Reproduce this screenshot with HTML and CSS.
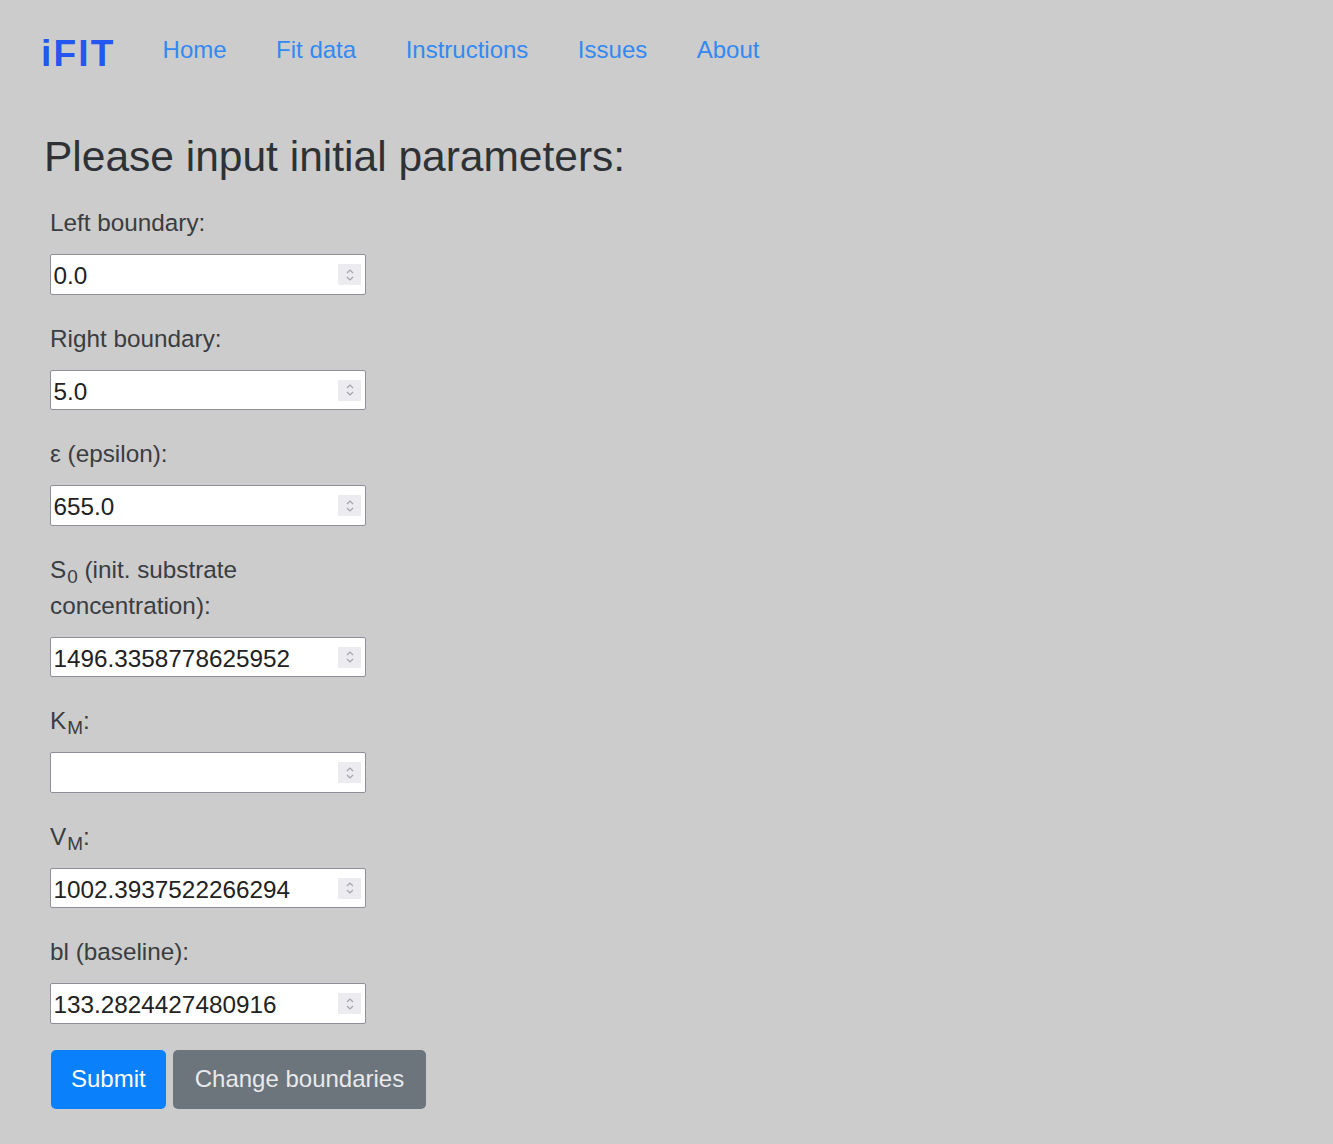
FILE: index.html
```html
<!DOCTYPE html>
<html lang="en">
<head>
<meta charset="utf-8">
<title>iFIT</title>
<link rel="stylesheet" href="styles.css">
</head>
<body>
<nav class="nav">
  <a class="brand" href="#">iFIT</a>
  <div class="links">
    <a class="link" href="#">Home</a>
    <a class="link" href="#">Fit data</a>
    <a class="link" href="#">Instructions</a>
    <a class="link" href="#">Issues</a>
    <a class="link" href="#">About</a>
  </div>
</nav>
<main class="main">
  <h3 class="title">Please input initial parameters:</h3>
  <form class="form">
    <div class="group">
      <label class="label">Left boundary:</label>
      <div class="field"><input class="input" type="text" value="0.0"><span class="spin"><svg width="10" height="16" viewBox="0 0 10 16"><path d="M2 6 L5 3 L8 6 M2 10 L5 13 L8 10" fill="none" stroke="#a3a3ad" stroke-width="1.2"/></svg></span></div>
    </div>
    <div class="group">
      <label class="label">Right boundary:</label>
      <div class="field"><input class="input" type="text" value="5.0"><span class="spin"><svg width="10" height="16" viewBox="0 0 10 16"><path d="M2 6 L5 3 L8 6 M2 10 L5 13 L8 10" fill="none" stroke="#a3a3ad" stroke-width="1.2"/></svg></span></div>
    </div>
    <div class="group">
      <label class="label">ε (epsilon):</label>
      <div class="field"><input class="input" type="text" value="655.0"><span class="spin"><svg width="10" height="16" viewBox="0 0 10 16"><path d="M2 6 L5 3 L8 6 M2 10 L5 13 L8 10" fill="none" stroke="#a3a3ad" stroke-width="1.2"/></svg></span></div>
    </div>
    <div class="group">
      <label class="label">S<sub class="sub">0</sub> (init. substrate concentration):</label>
      <div class="field"><input class="input" type="text" value="1496.3358778625952"><span class="spin"><svg width="10" height="16" viewBox="0 0 10 16"><path d="M2 6 L5 3 L8 6 M2 10 L5 13 L8 10" fill="none" stroke="#a3a3ad" stroke-width="1.2"/></svg></span></div>
    </div>
    <div class="group">
      <label class="label">K<sub class="sub">M</sub>:</label>
      <div class="field"><input class="input" type="text" value=""><span class="spin"><svg width="10" height="16" viewBox="0 0 10 16"><path d="M2 6 L5 3 L8 6 M2 10 L5 13 L8 10" fill="none" stroke="#a3a3ad" stroke-width="1.2"/></svg></span></div>
    </div>
    <div class="group">
      <label class="label">V<sub class="sub">M</sub>:</label>
      <div class="field"><input class="input" type="text" value="1002.3937522266294"><span class="spin"><svg width="10" height="16" viewBox="0 0 10 16"><path d="M2 6 L5 3 L8 6 M2 10 L5 13 L8 10" fill="none" stroke="#a3a3ad" stroke-width="1.2"/></svg></span></div>
    </div>
    <div class="group">
      <label class="label">bl (baseline):</label>
      <div class="field"><input class="input" type="text" value="133.2824427480916"><span class="spin"><svg width="10" height="16" viewBox="0 0 10 16"><path d="M2 6 L5 3 L8 6 M2 10 L5 13 L8 10" fill="none" stroke="#a3a3ad" stroke-width="1.2"/></svg></span></div>
    </div>
    <div class="buttons">
      <button class="btn btn-primary" type="button">Submit</button>
      <button class="btn btn-secondary" type="button">Change boundaries</button>
    </div>
  </form>
</main>
</body>
</html>
```

FILE: styles.css
```css
html, body {
  margin: 0;
  padding: 0;
}
body {
  background: #cccccc;
  font-family: "Liberation Sans", Arial, sans-serif;
  color: #33373b;
  min-height: 1144px;
}
.nav {
  display: flex;
  align-items: flex-start;
  padding: 32px 0 0 41px;
}
.brand {
  font-size: 37px;
  font-weight: bold;
  line-height: 36px;
  letter-spacing: 2.2px;
  color: #2456f0;
  text-decoration: none;
  margin-top: 4px;
}
.links {
  display: flex;
  gap: 49.5px;
  margin-left: 47px;
}
.link {
  font-size: 24px;
  line-height: 36px;
  color: #3389f2;
  text-decoration: none;
}
.main {
  padding-left: 44px;
}
.title {
  margin: 60px 0 0 0;
  font-size: 42.5px;
  line-height: 50.4px;
  font-weight: normal;
  color: #2e3236;
}
.form {
  width: 316px;
  margin: 23px 0 0 6px;
}
.group {
  margin-bottom: 26px;
}
.label {
  display: block;
  font-size: 24.3px;
  line-height: 36px;
  margin-bottom: 13px;
  color: #3a3d41;
}
.sub {
  font-size: 78%;
  line-height: 0;
  vertical-align: -5px;
  margin-left: 1px;
}
.field {
  display: flex;
  align-items: center;
  height: 40.5px;
  box-sizing: border-box;
  border: 1.5px solid #8f8f99;
  border-radius: 2px;
  background: #ffffff;
  padding: 0 4px 0 2.5px;
}
.input {
  flex: 1;
  min-width: 0;
  border: none;
  outline: none;
  background: transparent;
  font-family: "Liberation Sans", Arial, sans-serif;
  font-size: 24.3px;
  color: #222222;
  padding: 3px 0 0 0;
  margin: 0;
}
.spin {
  display: flex;
  align-items: center;
  justify-content: center;
  width: 23px;
  height: 21px;
  background: #ebebf0;
}
.buttons {
  display: flex;
  gap: 7px;
  margin-left: 1px;
}
.btn {
  flex-shrink: 0;
  white-space: nowrap;
  height: 59px;
  border: none;
  border-radius: 5px;
  font-family: "Liberation Sans", Arial, sans-serif;
  font-size: 24px;
  color: #ffffff;
  padding: 0 20px;
  cursor: pointer;
}
.btn-primary {
  background: #0a80fb;
}
.btn-secondary {
  background: #6c747c;
  padding: 0 22px;
  color: #e8eaec;
}
```
